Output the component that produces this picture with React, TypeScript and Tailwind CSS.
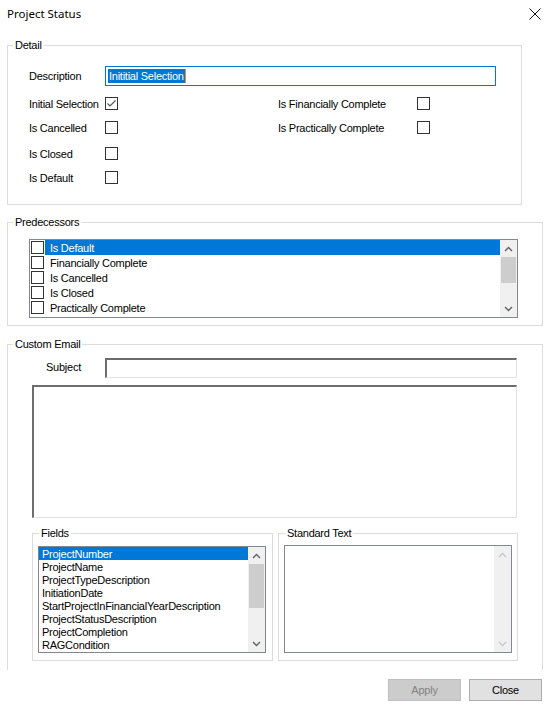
import React from "react";

const predecessors = [
  "Is Default",
  "Financially Complete",
  "Is Cancelled",
  "Is Closed",
  "Practically Complete",
];

const fields = [
  "ProjectNumber",
  "ProjectName",
  "ProjectTypeDescription",
  "InitiationDate",
  "StartProjectInFinancialYearDescription",
  "ProjectStatusDescription",
  "ProjectCompletion",
  "RAGCondition",
];

function Check({ checked = false }: { checked?: boolean }) {
  return (
    <span className="w-[13px] h-[13px] border border-[#333333] bg-white flex items-center justify-center shrink-0">
      {checked && (
        <svg width="11" height="11" viewBox="0 0 11 11">
          <polyline points="1.5,5.5 4,8 9.5,2.5" fill="none" stroke="#555555" strokeWidth="1.2" />
        </svg>
      )}
    </span>
  );
}

function Chevron({ up, color = "#606060" }: { up?: boolean; color?: string }) {
  return (
    <svg width="9" height="6" viewBox="0 0 9 6">
      <polyline
        points={up ? "1,5 4.5,1.5 8,5" : "1,1 4.5,4.5 8,1"}
        fill="none"
        stroke={color}
        strokeWidth="1.4"
      />
    </svg>
  );
}

function ScrollBar({ thumbTop, thumbHeight, disabled }: { thumbTop?: number; thumbHeight?: number; disabled?: boolean }) {
  const arrow = disabled ? "#c8c8c8" : "#606060";
  return (
    <div className="w-[17px] h-full bg-[#f0f0f0] flex flex-col shrink-0">
      <div className="h-[17px] flex items-center justify-center">
        <Chevron up color={arrow} />
      </div>
      <div className="flex-1 flex flex-col">
        {!disabled && (
          <div
            className="bg-[#cdcdcd] mx-[1px]"
            style={{ marginTop: thumbTop, height: thumbHeight }}
          />
        )}
      </div>
      <div className="h-[17px] flex items-center justify-center">
        <Chevron color={arrow} />
      </div>
    </div>
  );
}

function CheckRow({ label, checked }: { label: string; checked?: boolean }) {
  return (
    <div className="flex items-center w-[249px]">
      <span className="w-[76px] whitespace-nowrap">{label}</span>
      <Check checked={checked} />
    </div>
  );
}

export default function App() {
  return (
    <div
      className="w-[548px] h-[715px] bg-white overflow-hidden text-[11px] text-black leading-[14px] tracking-[-0.25px]"
      style={{ fontFamily: '"Liberation Sans", Arial, sans-serif' }}
    >
      {/* title bar */}
      <div className="h-[28px] flex items-center justify-between pl-[7px] pr-[7px]">
        <span className="text-[11.5px] tracking-normal font-['Segoe_UI','Noto_Sans',sans-serif]">Project Status</span>
        <svg width="12" height="12" viewBox="0 0 12 12">
          <path d="M0.5 0.5 L11.5 11.5 M11.5 0.5 L0.5 11.5" stroke="#111" strokeWidth="1" />
        </svg>
      </div>

      <div className="pl-[7px]">
        {/* Detail */}
        <fieldset className="mt-[10px] w-[515px] h-[167px] border border-[#dcdcdc]">
          <legend className="ml-[5px] px-[2px] leading-[14px]">Detail</legend>
          <div className="pl-[21px]">
            <div className="mt-[14px] h-[20px] flex items-center">
              <span className="w-[76px]">Description</span>
              <div className="w-[391px] h-[20px] border border-[#0078d7] flex items-center pl-[2px]">
                <span className="bg-[#0078d7] text-white px-[1px] leading-[14px]">Inititial Selection</span>
                <span className="w-[1px] h-[14px] bg-[#f08a24]" />
              </div>
            </div>
            <div className="mt-[11px] h-[13px] flex items-center">
              <CheckRow label="Initial Selection" checked />
              <span className="w-[139px] whitespace-nowrap">Is Financially Complete</span>
              <Check />
            </div>
            <div className="mt-[11px] h-[13px] flex items-center">
              <CheckRow label="Is Cancelled" />
              <span className="w-[139px] whitespace-nowrap">Is Practically Complete</span>
              <Check />
            </div>
            <div className="mt-[13px] h-[13px] flex items-center">
              <CheckRow label="Is Closed" />
            </div>
            <div className="mt-[11px] h-[13px] flex items-center">
              <CheckRow label="Is Default" />
            </div>
          </div>
        </fieldset>

        {/* Predecessors */}
        <fieldset className="mt-[10px] w-[536px] h-[111px] border border-[#dcdcdc]">
          <legend className="ml-[5px] px-[2px] leading-[14px]">Predecessors</legend>
          <div className="mt-[10px] ml-[21px] w-[489px] h-[79px] border border-[#828790] flex">
            <div className="flex-1 flex flex-col">
              {predecessors.map((p, i) => (
                <div key={p} className="h-[15px] flex items-center">
                  <span className="ml-[1px]">
                    <Check />
                  </span>
                  <span
                    className={
                      "flex-1 h-[15px] ml-[1px] pl-[5px] flex items-center " +
                      (i === 0 ? "bg-[#0078d7] text-white" : "")
                    }
                  >
                    {p}
                  </span>
                </div>
              ))}
            </div>
            <ScrollBar thumbTop={0} thumbHeight={26} />
          </div>
        </fieldset>

        {/* Custom Email */}
        <fieldset className="mt-[11px] w-[536px] h-[333px] border border-b-0 border-[#dcdcdc]">
          <legend className="ml-[5px] px-[2px] leading-[14px]">Custom Email</legend>
          <div className="mt-[7px] h-[20px] flex items-center pl-[38px]">
            <span className="w-[59px] -mt-[2px]">Subject</span>
            <div className="w-[412px] h-[20px] border-t-2 border-l-2 border-r border-b border-t-[#6d6d6d] border-l-[#6d6d6d] border-r-[#e3e3e3] border-b-[#e3e3e3] bg-white" />
          </div>
          <div className="mt-[7px] ml-[24px] w-[485px] h-[133px] border-t-2 border-l-2 border-r border-b border-t-[#6d6d6d] border-l-[#6d6d6d] border-r-[#e3e3e3] border-b-[#e3e3e3] bg-white" />

          <div className="mt-[8px] ml-[24px] flex gap-[5px]">
            <fieldset className="w-[241px] h-[135px] border border-[#dcdcdc]">
              <legend className="ml-[6px] px-[2px] leading-[14px]">Fields</legend>
              <div className="mt-[6px] ml-[5px] w-[228px] h-[107px] border border-[#828790] flex">
                <div className="flex-1 flex flex-col">
                  {fields.map((f, i) => (
                    <div
                      key={f}
                      className={
                        "h-[13px] pl-[3px] flex items-center whitespace-nowrap " +
                        (i === 0 ? "bg-[#0078d7] text-white" : "")
                      }
                    >
                      {f}
                    </div>
                  ))}
                </div>
                <ScrollBar thumbTop={0} thumbHeight={44} />
              </div>
            </fieldset>
            <fieldset className="w-[240px] h-[135px] border border-[#dcdcdc]">
              <legend className="ml-[6px] px-[2px] leading-[14px]">Standard Text</legend>
              <div className="mt-[5px] ml-[5px] w-[228px] h-[108px] border border-[#828790] flex">
                <div className="flex-1" />
                <ScrollBar disabled />
              </div>
            </fieldset>
          </div>
        </fieldset>
      </div>

      {/* buttons */}
      <div className="mt-[9px] pr-[6px] flex justify-end gap-[8px]">
        <button className="w-[73px] h-[22px] bg-[#cccccc] border border-[#bfbfbf] text-[#838383]">
          Apply
        </button>
        <button className="w-[73px] h-[22px] bg-[#e1e1e1] border border-[#adadad]">
          Close
        </button>
      </div>
    </div>
  );
}
